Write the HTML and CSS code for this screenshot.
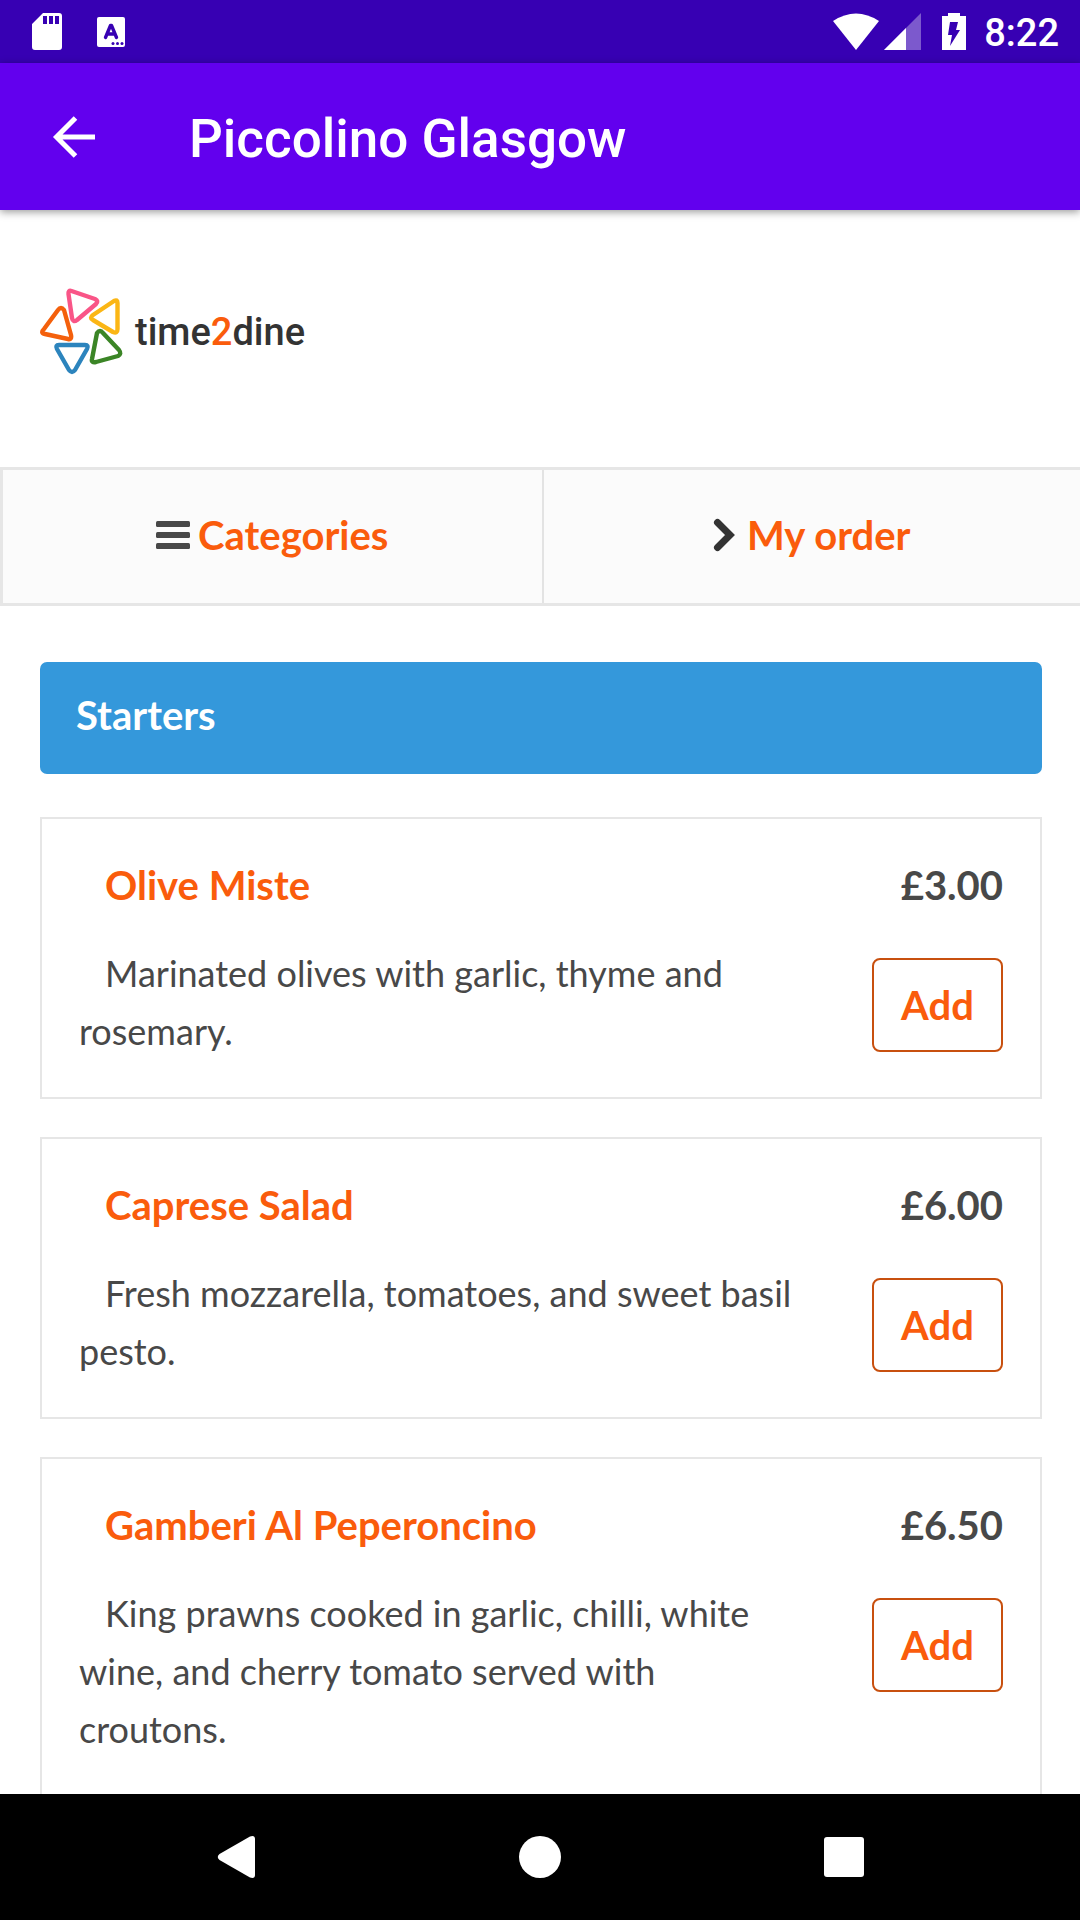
FILE: index.html
```html
<!DOCTYPE html>
<html lang="en">
<head>
<meta charset="utf-8">
<meta name="viewport" content="width=device-width, initial-scale=1">
<title>Piccolino Glasgow</title>
<link rel="stylesheet" href="styles.css">
</head>
<body>
<div class="status-bar">
  <div class="status-group status-left">
    <svg width="32" height="40" viewBox="0 0 32 40" aria-hidden="true"><path fill="#fff" fill-rule="evenodd" d="M12 1h16q3 0 3 3v31q0 3-3 3H4q-3 0-3-3V12zM12 4v8h4V4zM18 4v8h4V4zM24 4v8h4V4z"/></svg>
    <svg width="30" height="32" viewBox="0 0 30 32" aria-hidden="true"><rect x="1" y="1" width="28" height="30" rx="2" fill="#fff"/><path d="M9.500 21.500 14.500 9.500h1L20.500 21.500M11.500 18h7" fill="none" stroke="#3700b3" stroke-width="3.400" stroke-linecap="round" stroke-linejoin="round"/><g fill="#3700b3"><circle cx="17" cy="27.500" r="1.500"/><circle cx="21.500" cy="27.500" r="1.500"/><circle cx="26" cy="27.500" r="1.500"/></g></svg>
  </div>
  <div class="status-group status-right">
    <svg width="124" height="38" viewBox="0 0 124 38" aria-hidden="true"><g fill="#fff"><path d="M0 8Q23-7 46 8L23 37z"/><path d="M88 0v37H51z" opacity=".35"/><path d="M73 15v22H51z"/></g></svg>
    <svg class="battery" width="24" height="38" viewBox="0 0 24 38" aria-hidden="true"><path fill="#fff" d="M6 0h12v3h6v34H0V3h6z"/><path fill="#3700b3" d="M8 9h8l-2 8h4L8 33l2-11H6z"/></svg>
    <span class="clock">8:22</span>
  </div>
</div>
<header class="app-bar">
  <button class="back" type="button" aria-label="Back"><svg width="44" height="44" viewBox="0 0 44 44" aria-hidden="true"><path d="M43 22H5M23.500 3 4.500 22l19 19" fill="none" stroke="#fff" stroke-width="5"/></svg></button>
  <h1 class="app-title">Piccolino Glasgow</h1>
</header>
<main class="page">
  <a class="brand" href="#">
    <svg width="84" height="88" viewBox="0 0 84 88" fill="none" stroke-width="4.400" stroke-linejoin="round" aria-hidden="true">
      <path stroke="#f95587" d="M31.500 3Q28 2 28.500 6L32 30Q33 35 37 32L56 16Q59 13 55 11Z"/>
      <path stroke="#fbb615" d="M74 13Q77.500 11 77.500 15V41Q77.500 46 73 44L53 32Q49 30 53 27Z"/>
      <path stroke="#f4600c" d="M18 22Q21 18 24 22L31 47Q32 52 28 51L5 46Q0 45 4 41Z"/>
      <path stroke="#2c84bd" d="M19 57H45Q49 57 47 61L35 82Q32 86 29 82L17 61Q15 57 19 57Z"/>
      <path stroke="#3b8526" d="M57 45Q60 41 63 45L79 62Q82 66 78 68L56 74Q51 75 52 71Z"/>
    </svg>
    <span class="brand-name">time<span class="brand-accent">2</span>dine</span>
  </a>
  <nav class="tabs">
    <a class="tab" href="#categories"><svg width="34" height="28" viewBox="0 0 34 28" fill="#484848" aria-hidden="true"><rect width="34" height="6" rx="1.500"/><rect y="11" width="34" height="6" rx="1.500"/><rect y="22" width="34" height="6" rx="1.500"/></svg>Categories</a>
    <a class="tab tab-order" href="#order"><svg width="22" height="34" viewBox="0 0 22 34" fill="none" stroke="#333" stroke-width="7" stroke-linecap="round" stroke-linejoin="miter" aria-hidden="true"><path d="M4.500 4.500 17 17 4.500 29.500"/></svg>My order</a>
  </nav>
  <section class="menu" id="categories">
    <h2 class="category">Starters</h2>
    <article class="dish">
      <h3 class="dish-name">Olive Miste</h3>
      <span class="price">£3.00</span>
      <p class="description">Marinated olives with garlic, thyme and rosemary.</p>
      <button class="add" type="button">Add</button>
    </article>
    <article class="dish">
      <h3 class="dish-name">Caprese Salad</h3>
      <span class="price">£6.00</span>
      <p class="description">Fresh mozzarella, tomatoes, and sweet basil pesto.</p>
      <button class="add" type="button">Add</button>
    </article>
    <article class="dish">
      <h3 class="dish-name">Gamberi Al Peperoncino</h3>
      <span class="price">£6.50</span>
      <p class="description">King prawns cooked in garlic, chilli, white wine, and cherry tomato served with croutons.</p>
      <button class="add" type="button">Add</button>
    </article>
  </section>
</main>
<footer class="system-nav">
  <button type="button" aria-label="Back"><svg width="44" height="44" viewBox="0 0 44 44" aria-hidden="true"><path fill="#fff" d="M36 1.500Q41 0 41 4v36q0 4-5 2.500L5.500 25Q2 22 5.500 19z"/></svg></button>
  <button type="button" aria-label="Home"><svg width="44" height="44" viewBox="0 0 44 44" aria-hidden="true"><circle cx="22" cy="22" r="21" fill="#fff"/></svg></button>
  <button type="button" aria-label="Recent apps"><svg width="44" height="44" viewBox="0 0 44 44" aria-hidden="true"><rect x="2" y="2" width="40" height="40" rx="3" fill="#fff"/></svg></button>
</footer>
</body>
</html>
```
FILE: styles.css
```css
* { box-sizing: border-box; }

body {
  margin: 0;
  height: 100vh;
  display: flex;
  flex-direction: column;
  background: #fff;
  color: #484848;
  font: 36px/58px Lato, sans-serif;
}

h1, h2, h3, p { margin: 0; }
svg { display: block; flex: none; }
a { color: inherit; text-decoration: none; }
button { padding: 0; border: 0; background: none; color: inherit; font: inherit; }

.status-bar {
  flex: none;
  display: flex;
  justify-content: space-between;
  height: 63px;
  padding: 0 21px 0 31px;
  background: #3700b3;
  color: #fff;
}
.status-group { display: flex; align-items: center; }
.status-left { gap: 33px; }
.status-right { gap: 18px; }
.battery { margin-left: -33px; }
.clock { font: 500 38px/44px Roboto, sans-serif; padding-top: 3px; }

.app-bar {
  flex: none;
  display: flex;
  align-items: center;
  gap: 93px;
  height: 147px;
  padding-left: 52px;
  background: #6200ee;
  color: #fff;
  box-shadow: 0 2px 8px rgba(0, 0, 0, 0.4);
  z-index: 1;
}
.app-title { font: 500 53px/64px Roboto, sans-serif; padding-top: 4px; }

.page { flex: 1; min-height: 0; overflow: hidden; }

.brand {
  display: flex;
  align-items: center;
  gap: 11px;
  padding: 78px 40px 91px;
}
.brand-name { color: #333; font: 500 38px/44px Roboto, sans-serif; }
.brand-accent { color: #fa5c0c; }

.tabs {
  display: grid;
  grid-template-columns: 1fr 1fr;
  background: #fbfbfb;
  border: 3px solid #e6e6e6;
  border-right: 0;
}
.tab {
  display: flex;
  align-items: center;
  justify-content: center;
  gap: 8px;
  padding: 36px 0 39px;
  color: #fa5c0c;
  font-size: 40px;
  font-weight: 700;
}
.tab + .tab { border-left: 2px solid #e3e3e3; }
.tab-order { gap: 12px; }

.menu { padding: 56px 38px 38px 40px; }
.category {
  margin-bottom: 43px;
  padding: 24px 36px 30px;
  border-radius: 7px;
  background: #3498db;
  color: #fff;
  font-size: 40px;
  line-height: 58px;
}

.dish {
  display: grid;
  grid-template-columns: 1fr auto;
  column-gap: 60px;
  row-gap: 30px;
  align-items: start;
  margin-bottom: 38px;
  padding: 37px;
  border: 2px solid #e6e6e6;
}
.dish-name, .price { font-size: 40px; font-weight: 700; line-height: 58px; }
.dish-name { padding-left: 26px; color: #fa5c0c; }
.price { text-align: right; }
.description { text-indent: 26px; }
.add {
  width: 131px;
  height: 94px;
  margin-top: 14px;
  border: 2px solid #c8500f;
  border-radius: 8px;
  color: #fa5c0c;
  font-size: 40px;
  font-weight: 700;
}

.system-nav {
  flex: none;
  display: flex;
  justify-content: center;
  gap: 260px;
  padding: 41px 0;
  background: #000;
}
```
